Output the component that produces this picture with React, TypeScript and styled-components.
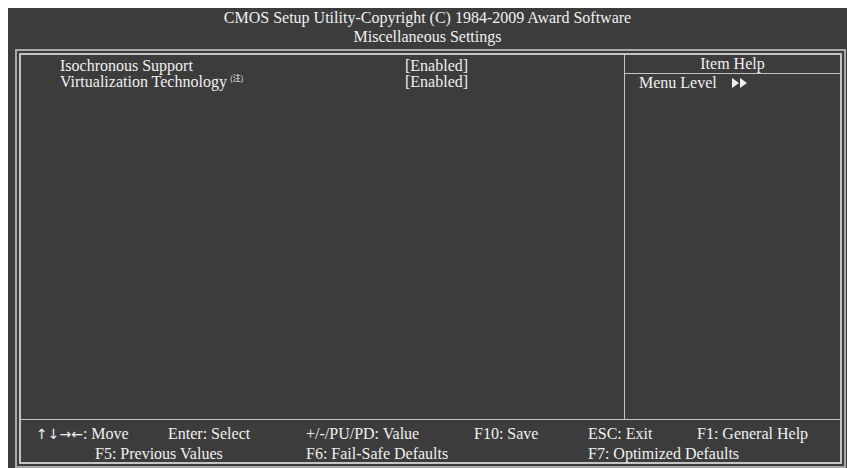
import React from "react";
import styled, { createGlobalStyle } from "styled-components";

const Global = createGlobalStyle`
  html, body { background: #ffffff; }
  body { margin: 8px 0 0 8px; font-family: "Liberation Serif", "Times New Roman", serif; }
  * { box-sizing: border-box; }
`;

const Screen = styled.div`
  width: 839px;
  height: 460px;
  background: #3c3c3c;
  color: #f0f0f0;
  font-size: 16px;
  display: flex;
  flex-direction: column;
  overflow: hidden;
`;

const Header = styled.header`
  height: 41px;
  text-align: center;
  line-height: 19px;
  white-space: nowrap;
`;

const Frame = styled.div`
  margin: 0 1px 0 7px;
  height: 419px;
  border: 2px solid #a9a9a9;
  padding: 2px;
`;

const Inner = styled.div`
  height: 100%;
  border: 2px solid #c4c4c4;
  display: grid;
  grid-template-columns: 603px 1px 1fr;
  grid-template-rows: 1fr 1px 42px;
`;

const Main = styled.div`
  padding: 3px 0 0 39px;
`;

const Row = styled.div`
  display: flex;
  line-height: 16px;
  white-space: nowrap;
`;

const Label = styled.span`
  width: 345px;
`;

const Note = styled.sup`
  font-family: "Noto Sans CJK SC", "Liberation Serif", sans-serif;
  font-size: 8px;
  margin-left: 3px;
  vertical-align: 6px;
  line-height: 0;
`;

const VLine = styled.div`
  background: #c4c4c4;
`;

const HLine = styled.div`
  grid-column: 1 / -1;
  background: #c4c4c4;
`;

const Help = styled.aside`
  display: flex;
  flex-direction: column;
`;

const HelpTitle = styled.div`
  height: 19px;
  line-height: 18px;
  text-align: center;
  border-bottom: 1px solid #c4c4c4;
`;

const HelpLine = styled.div`
  padding-left: 14px;
  line-height: 17px;
  display: flex;
  align-items: center;
  white-space: nowrap;
`;

const Arrows = styled.svg`
  margin-left: 15px;
  margin-top: 1px;
`;

const Footer = styled.footer`
  grid-column: 1 / -1;
  padding-top: 4px;
  line-height: 19px;
  white-space: nowrap;
`;

const FootRow = styled.div<{ $indent: number }>`
  display: flex;
  padding-left: ${(p) => p.$indent}px;
`;

const Cell = styled.span<{ $w?: number }>`
  flex: ${(p) => (p.$w ? `0 0 ${p.$w}px` : "1 1 auto")};
`;

const KeyArrows = styled.span`
  font-family: "DejaVu Sans", sans-serif;
  font-size: 14px;
`;

export default function App() {
  return (
    <>
      <Global />
      <Screen>
        <Header>
          <div>CMOS Setup Utility-Copyright (C) 1984-2009 Award Software</div>
          <div>Miscellaneous Settings</div>
        </Header>
        <Frame>
          <Inner>
            <Main>
              <Row>
                <Label>Isochronous Support</Label>
                <span>[Enabled]</span>
              </Row>
              <Row>
                <Label>
                  Virtualization Technology<Note>(注)</Note>
                </Label>
                <span>[Enabled]</span>
              </Row>
            </Main>
            <VLine />
            <Help>
              <HelpTitle>Item Help</HelpTitle>
              <HelpLine>
                Menu Level
                <Arrows width="16" height="10" viewBox="0 0 16 10">
                  <polygon points="0,0 7,5 0,10" fill="#f0f0f0" />
                  <polygon points="8,0 15,5 8,10" fill="#f0f0f0" />
                </Arrows>
              </HelpLine>
            </Help>
            <HLine />
            <Footer>
              <FootRow $indent={15}>
                <Cell $w={132}>
                  <KeyArrows>↑↓→←</KeyArrows>: Move
                </Cell>
                <Cell $w={138}>Enter: Select</Cell>
                <Cell $w={168}>+/-/PU/PD: Value</Cell>
                <Cell $w={114}>F10: Save</Cell>
                <Cell $w={109}>ESC: Exit</Cell>
                <Cell>F1: General Help</Cell>
              </FootRow>
              <FootRow $indent={74}>
                <Cell $w={211}>F5: Previous Values</Cell>
                <Cell $w={282}>F6: Fail-Safe Defaults</Cell>
                <Cell>F7: Optimized Defaults</Cell>
              </FootRow>
            </Footer>
          </Inner>
        </Frame>
      </Screen>
    </>
  );
}
